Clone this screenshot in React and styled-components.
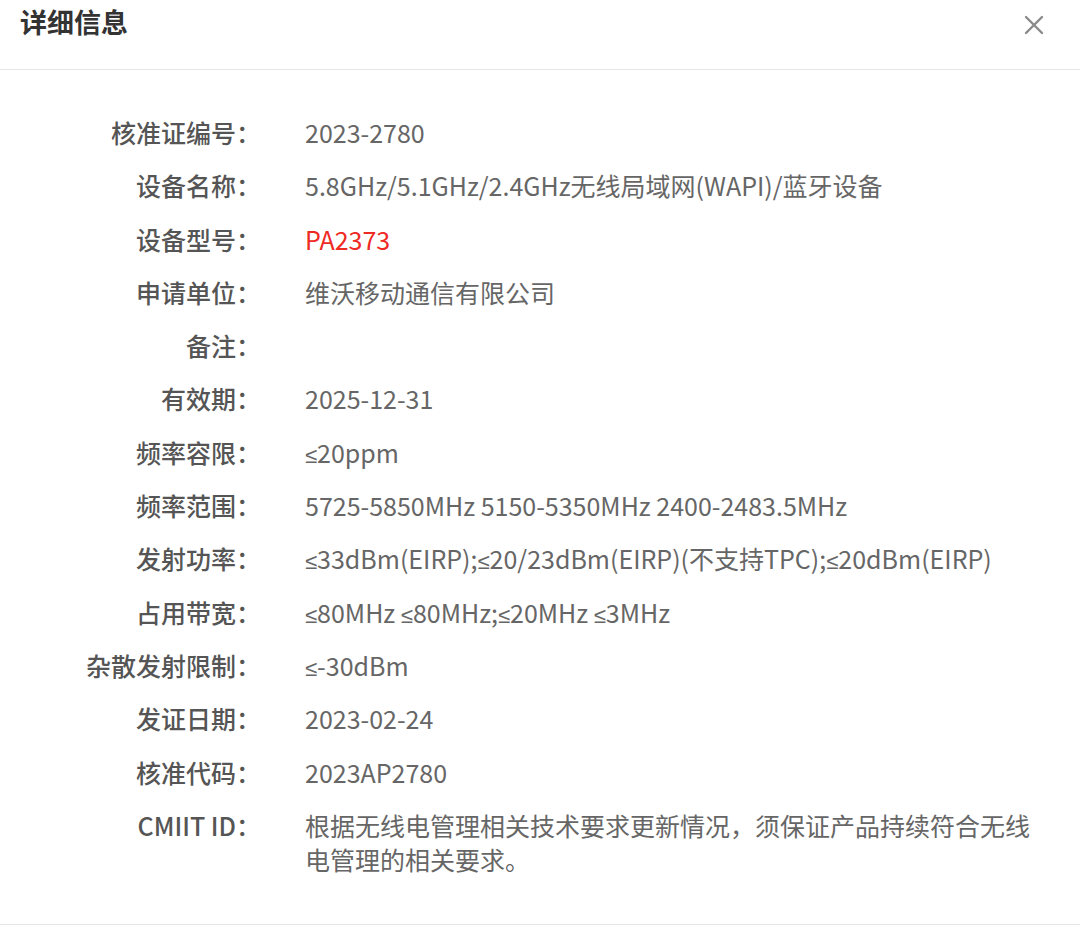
import React from 'react';
import styled, { createGlobalStyle } from 'styled-components';

const GlobalStyle = createGlobalStyle`
  body {
    margin: 0;
    background: #fff;
    font-family: "Noto Sans CJK SC", "Noto Sans", sans-serif;
  }
`;

const rows = [
  { label: '核准证编号：', value: '2023-2780' },
  { label: '设备名称：', value: '5.8GHz/5.1GHz/2.4GHz无线局域网(WAPI)/蓝牙设备' },
  { label: '设备型号：', value: 'PA2373', highlight: true },
  { label: '申请单位：', value: '维沃移动通信有限公司' },
  { label: '备注：', value: '' },
  { label: '有效期：', value: '2025-12-31' },
  { label: '频率容限：', value: '≤20ppm' },
  { label: '频率范围：', value: '5725-5850MHz 5150-5350MHz 2400-2483.5MHz' },
  { label: '发射功率：', value: '≤33dBm(EIRP);≤20/23dBm(EIRP)(不支持TPC);≤20dBm(EIRP)' },
  { label: '占用带宽：', value: '≤80MHz ≤80MHz;≤20MHz ≤3MHz' },
  { label: '杂散发射限制：', value: '≤-30dBm' },
  { label: '发证日期：', value: '2023-02-24' },
  { label: '核准代码：', value: '2023AP2780' },
  { label: 'CMIIT ID：', value: '根据无线电管理相关技术要求更新情况，须保证产品持续符合无线电管理的相关要求。' },
];

const Dialog = styled.div`
  width: 1080px;
  background: #fff;
`;

const Header = styled.div`
  height: 70px;
  border-bottom: 1px solid #e6e6ea;
  display: flex;
  justify-content: space-between;
  align-items: flex-start;
  padding: 0 20px;
  box-sizing: border-box;
`;

const Title = styled.h2`
  margin: 0;
  font-size: 27px;
  line-height: 44px;
  font-weight: 700;
  color: #333;
`;

const Close = styled.button`
  margin-top: 11px;
  margin-right: 12px;
  width: 28px;
  height: 28px;
  padding: 0;
  border: none;
  background: none;
  display: flex;
  align-items: center;
  justify-content: center;
  cursor: pointer;
`;

const Body = styled.div`
  padding: 45px 40px 48px 0;
  border-bottom: 1px solid #e6e6ea;
  display: flex;
  flex-direction: column;
  gap: 19.3px;
`;

const Row = styled.div`
  display: grid;
  grid-template-columns: 261px 1fr;
  column-gap: 44px;
  font-size: 25px;
  line-height: 34px;
`;

const Label = styled.div`
  text-align: right;
  font-weight: 500;
  color: #555;
  white-space: nowrap;
`;

const Value = styled.div`
  color: ${(p) => (p.$highlight ? '#ee2a24' : '#666')};
  min-height: 34px;
  word-break: break-all;
`;

const Sym = styled.span`
  font-family: "DejaVu Sans", sans-serif;
  font-weight: 300;
  font-size: 22px;
  line-height: 0;
`;

function renderValue(text) {
  return text.split('≤').map((part, i) => (
    <React.Fragment key={i}>
      {i > 0 && <Sym>≤</Sym>}
      {part}
    </React.Fragment>
  ));
}

export default function App() {
  return (
    <>
      <GlobalStyle />
      <Dialog>
        <Header>
          <Title>详细信息</Title>
          <Close aria-label="关闭">
            <svg width="20" height="20" viewBox="0 0 20 20">
              <path d="M2 2L18 18M18 2L2 18" stroke="#8a8a8a" strokeWidth="2.4" strokeLinecap="round" />
            </svg>
          </Close>
        </Header>
        <Body>
          {rows.map((r) => (
            <Row key={r.label}>
              <Label>{r.label}</Label>
              <Value $highlight={r.highlight}>{renderValue(r.value)}</Value>
            </Row>
          ))}
        </Body>
      </Dialog>
    </>
  );
}
